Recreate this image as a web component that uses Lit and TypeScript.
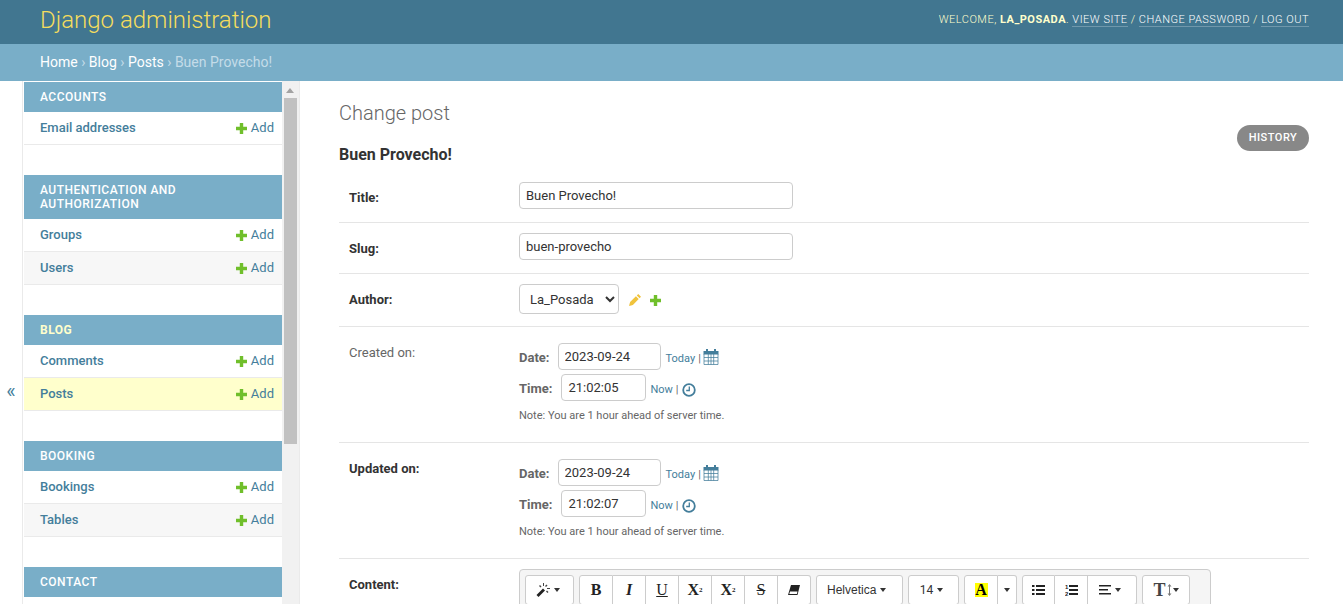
import { LitElement, html, css, svg } from "lit";
import { customElement } from "lit/decorators.js";

const modules = [
  { name: "Accounts", models: ["Email addresses"] },
  { name: "Authentication and Authorization", models: ["Groups", "Users"] },
  { name: "Blog", models: ["Comments", "Posts"], current: "Posts" },
  { name: "Booking", models: ["Bookings", "Tables"] },
  { name: "Contact", models: [] as string[] },
];

const plus = html`<svg class="plus" viewBox="0 0 11 11">
  <path fill="#70bf2b" d="M3.800 0h3.400v3.800H11v3.400H7.200V11H3.800V7.200H0V3.800h3.800z" />
</svg>`;

const pencil = html`<svg class="pencil" viewBox="0 0 12 12">
  <path fill="#f0c33c" d="M9.200 0l2.800 2.800-1.400 1.400-2.800-2.800zM6.900 2.300l2.800 2.800-5.800 5.800L0 12l1.100-3.900z" />
</svg>`;

const calendar = html`<svg class="cal" viewBox="0 0 16 16">
  <path fill="#447e9b" d="M3 0h2v2h6V0h2v2h2.500v3.500H.5V2H3z" />
  <path
    fill="none"
    stroke="#447e9b"
    stroke-opacity="0.75"
    d="M1 5v10.500h14V5M5.300 5v10.500M8 5v10.500M10.700 5v10.500M1 8.500h14M1 12h14"
  />
</svg>`;

const clock = html`<svg class="clock" viewBox="0 0 14 14">
  <circle cx="7" cy="7" r="5.800" fill="none" stroke="#447e9b" stroke-width="1.800" />
  <path fill="none" stroke="#447e9b" stroke-width="1.300" d="M7.300 3.500v4H4.200" />
</svg>`;

// summernote toolbar glyphs
const caret = html`<i class="caret"></i>`;
const tb = (d: unknown, w = 14) =>
  html`<svg class="tb" width=${w} height="14" viewBox="0 0 ${w} 14">${d}</svg>`;
const wand = tb(svg`<path fill="#222" d="M.5 12l6.500-6.500 2 2L2.500 14z" /><path fill="#444" d="M7 0h1v3H7zM11 5h3v1h-3zM3 3l1-1 1.500 1.500-1 1zM10.500 1.500l1 1L10 4 9 3zM10 8.500l1-1 1.500 1.500-1 1z" />`);
const eraser = tb(svg`<path fill="#222" d="M4 2h9l-2.500 10H1z" /><path fill="#fff" d="M3 8.500h7.500l-.6 2.500H2.300z" />`, 14);
const ul = tb(svg`<path fill="#222" d="M0 2h2.500v2H0zM0 6h2.500v2H0zM0 10h2.500v2H0zM4 2h9v2H4zM4 6h9v2H4zM4 10h9v2H4z" />`, 13);
const ol = tb(svg`<text x="0" y="6" font-size="6" font-family="Liberation Sans" fill="#222">1</text><text x="0" y="13" font-size="6" font-family="Liberation Sans" fill="#222">2</text><path fill="#222" d="M4 2h9v2H4zM4 6h9v2H4zM4 10h9v2H4z" />`, 13);
const align = tb(svg`<path fill="#222" d="M0 2h12v1.600H0zM0 6h9v1.600H0zM0 10h12v1.600H0z" />`, 12);
const updown = html`<svg width="5" height="12" viewBox="0 0 5 12">
  <path fill="#777" d="M2.500 0l2 2.500H3v7h1.500l-2 2.500-2-2.500H2v-7H.5z" />
</svg>`;

@customElement("app-root")
export class AppRoot extends LitElement {
  static styles = css`
    :host {
      display: block;
      height: 604px;
      overflow: hidden;
      font-family: Roboto, "Liberation Sans", sans-serif;
      font-size: 14px;
      color: #333;
      background: #fff;
    }
    a {
      color: #447e9b;
      text-decoration: none;
    }
    #header {
      height: 44px;
      box-sizing: border-box;
      background: #417690;
      padding: 0 34px 0 40px;
      display: flex;
      justify-content: space-between;
      color: #ffc;
    }
    .brand {
      font-size: 24px;
      font-weight: 300;
      color: #f5dd5d;
      line-height: 40px;
    }
    .tools {
      font-size: 11px;
      letter-spacing: 0.5px;
      text-transform: uppercase;
      font-weight: 300;
      line-height: 14px;
      padding-top: 13px;
    }
    .tools strong {
      font-weight: 700;
    }
    .tools a {
      color: #fff;
      border-bottom: 1px solid rgba(255, 255, 255, 0.25);
    }
    .crumbs {
      height: 37px;
      box-sizing: border-box;
      background: #79aec8;
      padding: 0 40px;
      line-height: 36px;
      color: #c4dce8;
      font-size: 14px;
      font-weight: 400;
    }
    .crumbs a {
      color: #fff;
    }
    .body {
      display: flex;
      height: 523px;
    }
    .toggle {
      width: 22px;
      flex: none;
      border-right: 1px solid #eaeaea;
      display: flex;
      align-items: center;
      justify-content: center;
      color: #447e9b;
      font-size: 20px;
      padding-top: 96px;
    }
    .side {
      width: 276px;
      flex: none;
      border-right: 1px solid #eaeaea;
      display: flex;
      overflow: hidden;
    }
    .apps {
      width: 258px;
      flex: none;
      padding-left: 1px;
      padding-top: 1px;
    }
    .module {
      margin-bottom: 30px;
    }
    .caption {
      background: #79aec8;
      color: #fff;
      font-size: 12px;
      font-weight: 500;
      letter-spacing: 0.5px;
      line-height: 14px;
      text-transform: uppercase;
      padding: 8px 16px;
    }
    .caption.current {
      color: #ffc;
      font-weight: 700;
    }
    .row {
      display: flex;
      justify-content: space-between;
      align-items: center;
      height: 33px;
      box-sizing: border-box;
      border-bottom: 1px solid #eaeaea;
      padding: 0 8px 0 16px;
      font-size: 13px;
      line-height: 16px;
    }
    .row:nth-child(odd) {
      background: #f7f7f7;
    }
    .row.on {
      background: #ffc;
    }
    .row b {
      font-weight: 500;
      color: #447e9b;
    }
    .add {
      display: flex;
      align-items: center;
      gap: 3.500px;
      font-weight: 400;
      color: #447e9b;
    }
    .plus {
      width: 11px;
      height: 11px;
      flex: none;
    }
    .bar {
      width: 17px;
      background: #f1f1f1;
      flex: none;
      position: relative;
    }
    .thumb {
      margin: 17px 2px 0;
      height: 346px;
      background: #c1c1c1;
    }
    .arrow {
      position: absolute;
      top: 7px;
      left: 4px;
      width: 0;
      height: 0;
      border: 4.500px solid transparent;
      border-top: 0;
      border-bottom: 5px solid #a3a3a3;
    }
    .main {
      flex: 1;
      padding: 20px 34px 0 39px;
      min-width: 0;
      position: relative;
    }
    h1 {
      margin: 0;
      font-size: 20px;
      font-weight: 300;
      color: #666;
      line-height: 24px;
    }
    .history {
      position: absolute;
      top: 44px;
      right: 34px;
      background: #888;
      color: #fff;
      font-size: 11px;
      font-weight: 500;
      letter-spacing: 0.5px;
      line-height: 26px;
      height: 26px;
      width: 72px;
      text-align: center;
      border-radius: 15px;
    }
    h2 {
      margin: 0;
      padding-top: 20px;
      font-size: 16px;
      font-weight: 700;
      line-height: 20px;
      color: #333;
    }
    .frow {
      display: flex;
      align-items: flex-start;
      border-bottom: 1px solid #e5e5e5;
      padding: 10px 10px 0;
      box-sizing: border-box;
    }
    .frow:last-child {
      border-bottom: 0;
    }
    .frow.title-row {
      height: 58px;
      padding-top: 17px;
    }
    .frow.slug-row {
      height: 51px;
    }
    .frow.author-row {
      height: 53px;
    }
    .frow.date-row {
      height: 116px;
      padding-top: 16px;
    }
    .frow > label {
      width: 170px;
      flex: none;
      font-size: 13px;
      line-height: 16px;
      font-weight: 700;
      color: #333;
      padding-top: 8px;
    }
    .frow.date-row > label {
      padding-top: 2px;
    }
    .frow > label.plain {
      font-weight: 400;
      color: #666;
    }
    input,
    select {
      font-family: Roboto, "Liberation Sans", sans-serif;
      font-size: 13px;
      color: #333;
      border: 1px solid #ccc;
      border-radius: 4px;
      box-sizing: border-box;
      background: #fff;
      padding: 0 6px;
      margin: 0;
    }
    .title {
      width: 274px;
      height: 27px;
    }
    .select {
      width: 100px;
      height: 30px;
      padding: 0 1px 0 6px;
    }
    .author {
      display: flex;
      align-items: center;
      gap: 10px;
    }
    .pencil {
      width: 12px;
      height: 12px;
      margin-top: 2px;
    }
    .author .plus {
      margin: 2px 0 0 -1px;
    }
    .line {
      display: flex;
      align-items: center;
      font-size: 13px;
      color: #666;
      height: 27px;
      margin-bottom: 4px;
    }
    .line strong {
      font-weight: 700;
      margin-right: 8px;
      padding-top: 2px;
      color: #666;
    }
    .line.time-line strong {
      margin-right: 9px;
    }
    .line input {
      height: 27px;
    }
    .date {
      width: 103px;
    }
    .time {
      width: 85px;
    }
    .short {
      font-size: 11px;
      margin-left: 5px;
      padding-top: 3px;
      display: flex;
      align-items: center;
      gap: 3px;
      color: #666;
    }
    .time-line .short {
      margin-left: 4px;
    }
    .cal {
      width: 16px;
      height: 16px;
      margin: -2px 0 0 -1px;
    }
    .clock {
      width: 14px;
      height: 14px;
      margin-top: 1px;
    }
    .note {
      font-size: 11px;
      color: #666;
      line-height: 14px;
      margin-top: 8px;
    }
    .editor {
      width: 692px;
      box-sizing: border-box;
      border: 1px solid #ccc;
      border-radius: 4px 4px 0 0;
      background: #f5f5f5;
      padding: 5px 0 0 5px;
      display: flex;
      gap: 5px;
      height: 60px;
    }
    .group {
      display: flex;
    }
    .btn {
      display: flex;
      align-items: center;
      justify-content: center;
      gap: 4px;
      height: 30px;
      background: #fff;
      border: 1px solid #ccc;
      border-left: 0;
      box-sizing: border-box;
      font-size: 12px;
      color: #333;
      font-family: "Liberation Serif", serif;
      font-weight: 700;
    }
    .btn:first-child {
      border-left: 1px solid #ccc;
      border-radius: 3px 0 0 3px;
    }
    .btn:last-child {
      border-radius: 0 3px 3px 0;
    }
    .btn:only-child {
      border-radius: 3px;
    }
    .btn.t {
      font-family: Roboto, "Liberation Sans", sans-serif;
      font-weight: 400;
    }
    .btn.face {
      font-family: "Liberation Sans", sans-serif;
      width: 87px;
      justify-content: flex-start;
      padding-left: 10px;
    }
    .btn.shift {
      padding-right: 4px;
    }
    .fmt {
      font-size: 16px;
      color: #222;
      gap: 0;
    }
    .fmt.thin {
      font-weight: 400;
    }
    .fmt.cap {
      font-size: 18px;
      gap: 1px;
      color: #444;
    }
    .caret {
      width: 0;
      height: 0;
      border: 3.500px solid transparent;
      border-top: 4px solid #333;
      border-bottom: 0;
    }
    sup,
    sub {
      font-size: 7px;
      line-height: 0;
    }
    .hl {
      background: #ff0;
      color: #000;
      width: 13px;
      height: 14px;
      font-size: 16px;
      line-height: 14px;
      text-align: center;
      display: block;
    }
  `;

  private renderModule(m: { name: string; models: string[]; current?: string }) {
    return html`<div class="module">
      <div class="caption ${m.current ? "current" : ""}">${m.name}</div>
      ${m.models.map(
        (x) => html`<div class="row ${x === m.current ? "on" : ""}">
          <b>${x}</b><span class="add">${plus}Add</span>
        </div>`
      )}
    </div>`;
  }

  private renderDates(date: string, time: string) {
    return html`<div>
      <div class="line">
        <strong>Date:</strong><input class="date" .value=${date} />
        <span class="short"><a href="#">Today</a> | ${calendar}</span>
      </div>
      <div class="line time-line">
        <strong>Time:</strong><input class="time" .value=${time} />
        <span class="short"><a href="#">Now</a> | ${clock}</span>
      </div>
      <div class="note">Note: You are 1 hour ahead of server time.</div>
    </div>`;
  }

  render() {
    return html`
      <div id="header">
        <div class="brand">Django administration</div>
        <div class="tools">
          Welcome, <strong>la_posada</strong>.
          <a href="#">View site</a> / <a href="#">Change password</a> /
          <a href="#">Log out</a>
        </div>
      </div>
      <div class="crumbs">
        <a href="#">Home</a> › <a href="#">Blog</a> › <a href="#">Posts</a> ›
        Buen Provecho!
      </div>
      <div class="body">
        <div class="toggle">«</div>
        <div class="side">
          <div class="apps">${modules.map((m) => this.renderModule(m))}</div>
          <div class="bar"><i class="arrow"></i><div class="thumb"></div></div>
        </div>
        <div class="main">
          <h1>Change post</h1>
          <a class="history" href="#">HISTORY</a>
          <h2>Buen Provecho!</h2>
          <div class="frow title-row">
            <label>Title:</label>
            <input class="title" .value=${"Buen Provecho!"} />
          </div>
          <div class="frow slug-row">
            <label>Slug:</label>
            <input class="title" .value=${"buen-provecho"} />
          </div>
          <div class="frow author-row">
            <label>Author:</label>
            <div class="author">
              <select class="select"><option>La_Posada</option></select>
              ${pencil}${plus}
            </div>
          </div>
          <div class="frow date-row">
            <label class="plain">Created on:</label>
            ${this.renderDates("2023-09-24", "21:02:05")}
          </div>
          <div class="frow date-row">
            <label>Updated on:</label>
            ${this.renderDates("2023-09-24", "21:02:07")}
          </div>
          <div class="frow">
            <label>Content:</label>
            <div class="editor">
              <div class="group">
                <div class="btn shift" style="width:49px">${wand}${caret}</div>
              </div>
              <div class="group">
                <div class="btn fmt" style="width:34px">B</div>
                <div class="btn fmt" style="width:33px"><em>I</em></div>
                <div class="btn fmt thin" style="width:33px"><u>U</u></div>
                <div class="btn fmt" style="width:33px">X<sup>2</sup></div>
                <div class="btn fmt" style="width:33px">X<sub>2</sub></div>
                <div class="btn fmt thin" style="width:33px"><s>S</s></div>
                <div class="btn" style="width:33px">${eraser}</div>
              </div>
              <div class="group">
                <div class="btn t face">Helvetica ${caret}</div>
              </div>
              <div class="group">
                <div class="btn t shift" style="width:51px">14 ${caret}</div>
              </div>
              <div class="group">
                <div class="btn" style="width:34px"><span class="hl">A</span></div>
                <div class="btn" style="width:19px">${caret}</div>
              </div>
              <div class="group">
                <div class="btn" style="width:33px">${ul}</div>
                <div class="btn" style="width:33px">${ol}</div>
                <div class="btn shift" style="width:49px">${align}${caret}</div>
              </div>
              <div class="group">
                <div class="btn fmt cap" style="width:48px">T${updown}${caret}</div>
              </div>
            </div>
          </div>
        </div>
      </div>
    `;
  }
}
